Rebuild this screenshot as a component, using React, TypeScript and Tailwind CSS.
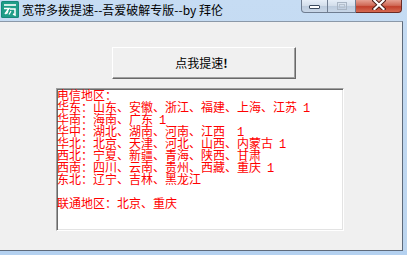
import React from "react";

const cjk = { fontFamily: '"Noto Sans CJK SC", "Noto Sans", sans-serif' };
const mono = { fontFamily: '"Liberation Mono", monospace' };

function Num({ s }: { s: string }) {
  return (
    <span className="text-[12px] tracking-[-1.2px] whitespace-pre" style={mono}>
      {s}
    </span>
  );
}

const lines: [string, string?][] = [
  ["电信地区："],
  ["华东：山东、安徽、浙江、福建、上海、江苏", " 1"],
  ["华南：海南、广东", " 1"],
  ["华中：湖北、湖南、河南、江西", "  1"],
  ["华北：北京、天津、河北、山西、内蒙古", " 1"],
  ["西北：宁夏、新疆、青海、陕西、甘肃"],
  ["西南：四川、云南、贵州、西藏、重庆", " 1"],
  ["东北：辽宁、吉林、黑龙江"],
  [""],
  ["联通地区：北京、重庆"],
];

export default function App() {
  return (
    <div className="w-[407px] h-[255px] overflow-hidden flex flex-col bg-[linear-gradient(180deg,#c6dcf3,#bcd5ef)]" style={cjk}>
      {/* title bar */}
      <div className="h-[21px] flex items-start relative">
        <div className="mt-[1px] ml-[1px] w-[18px] h-[17px]">
          <svg width="18" height="17" viewBox="0 0 18 17">
            <rect x="0" y="0" width="18" height="17" rx="1.5" fill="#16897a" />
            <rect x="1" y="1" width="16" height="15" rx="1" fill="#1f9d88" />
            <path d="M3 4 H15" stroke="#fff" strokeWidth="1.6" />
            <path d="M3 7.5 L8 7.5 L4 13" stroke="#fff" strokeWidth="1.5" fill="none" />
            <path d="M9 8 L14 8 L14 14 L12 13" stroke="#fff" strokeWidth="1.5" fill="none" />
            <path d="M7 10 L5.5 13 M10 10 L8 13.5" stroke="#fff" strokeWidth="1.2" />
          </svg>
        </div>
        <div className="ml-[3px] mt-[2px] text-[12px] leading-[16px] text-black">宽带多拨提速--吾爱破解专版--by 拜伦</div>
        {/* window buttons */}
        <div className="absolute left-[301px] top-0 flex">
          <div className="w-[27px] h-[13px] rounded-bl-[4px] border border-t-0 border-[#6f7d91] bg-[linear-gradient(180deg,#e6eef8,#d2ddea_50%,#bccbdd_51%,#c9d7e8)] flex items-center justify-center">
            <div className="w-[11px] h-[4px] bg-white border border-[#3b4a5e] rounded-[1px] mt-[2px]" />
          </div>
          <div className="w-[28px] h-[13px] border-b border-r border-[#6f7d91] bg-[linear-gradient(180deg,#e6eef8,#d2ddea_50%,#bccbdd_51%,#c9d7e8)] flex items-center justify-center">
            <div className="w-[10px] h-[8px] border border-[#a9b5c4] flex items-start justify-center">
              <div className="w-[6px] h-[4px] mt-[1px] border border-[#b6c1ce]" />
            </div>
          </div>
          <div className="w-[46px] h-[13px] rounded-br-[4px] border border-t-0 border-l-0 border-[#6b2b24] bg-[linear-gradient(180deg,#e6a193,#d06a57_45%,#c1402c_55%,#d66a52)] flex items-start justify-center">
            <svg width="14" height="10" viewBox="0 0 14 10" className="mt-[0px]">
              <path d="M2.5 0.5 L11.5 9 M11.5 0.5 L2.5 9" stroke="#4a1c16" strokeWidth="4" strokeLinecap="square" />
              <path d="M2.5 0.5 L11.5 9 M11.5 0.5 L2.5 9" stroke="#ffffff" strokeWidth="2.2" strokeLinecap="square" />
            </svg>
          </div>
        </div>
      </div>
      {/* client */}
      <div className="w-[403px] h-[230px] bg-[#f0f0f0] border-t border-r border-b border-t-[#8b98a8] border-r-[#5e6a7a] border-b-[#5e6a7a] flex flex-col pt-[25px]">
        <div className="ml-[112px] w-[184px] h-[32px] border border-t-white border-l-white border-r-[#696969] border-b-[#696969] shadow-[inset_-1px_-1px_0_#a0a0a0] bg-[#f0f0f0] flex items-center justify-center">
          <span className="text-[12px] leading-[14px] text-black -ml-[5px]">点我提速<span className="font-bold">!</span></span>
        </div>
        <div className="mt-[9px] ml-[56px] w-[288px] h-[143px] bg-white border border-t-[#a0a0a0] border-l-[#a0a0a0] border-r-white border-b-white shadow-[inset_1px_1px_0_#696969,inset_-1px_-1px_0_#e3e3e3] overflow-hidden">
          <div className="text-[12px] leading-[12px] text-[#ff0000] pl-0">
            {lines.map(([t, n], i) => (
              <div key={i} className="h-[12px] whitespace-pre">
                {t}
                {n ? <Num s={n} /> : null}
              </div>
            ))}
          </div>
        </div>
      </div>
      <div className="flex-1 bg-[#b4d1f0]" />
    </div>
  );
}
